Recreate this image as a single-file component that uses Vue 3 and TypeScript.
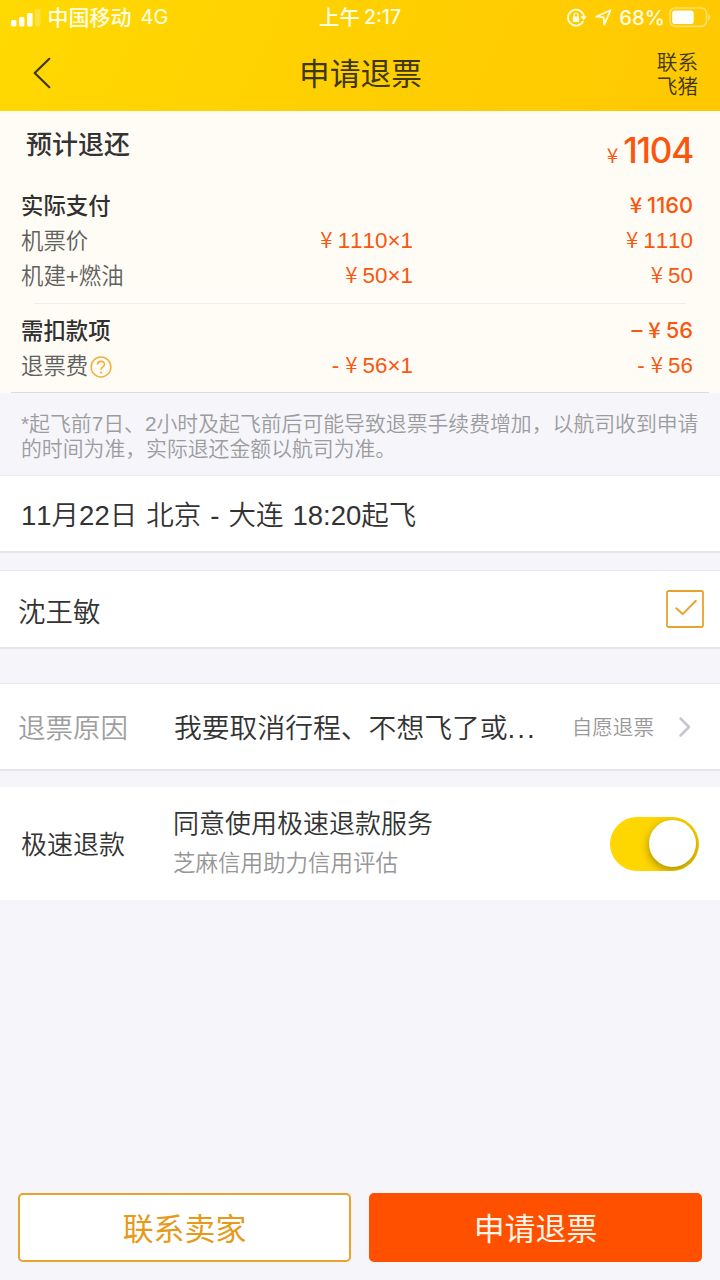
<script setup lang="ts">
interface FeeRow {
  label: string
  unit: string
  unitSign: string
  total: string
  totalSign: string
  strong?: boolean
  help?: boolean
}

const paid: FeeRow[] = [
  { label: '实际支付', unitSign: '', unit: '', totalSign: '', total: '1160', strong: true },
  { label: '机票价', unitSign: '', unit: '1110×1', totalSign: '', total: '1110' },
  { label: '机建+燃油', unitSign: '', unit: '50×1', totalSign: '', total: '50' },
]
const deducted: FeeRow[] = [
  { label: '需扣款项', unitSign: '', unit: '', totalSign: '–', total: '56', strong: true },
  { label: '退票费', unitSign: '-', unit: '56×1', totalSign: '-', total: '56', help: true },
]
const groups = [paid, deducted]
</script>

<template>
  <div class="page">
    <header class="top">
      <div class="status">
        <div class="status-left">
          <svg class="signal" width="30" height="18" viewBox="0 0 30 18">
            <rect x="0" y="11" width="5.4" height="6.6" rx="1.5" fill="#fffef2" />
            <rect x="8" y="8" width="5.4" height="9.6" rx="1.5" fill="#fffef2" />
            <rect x="16" y="4" width="5.6" height="13.6" rx="1.5" fill="#fffef2" />
            <rect x="24" y="0" width="5.4" height="17.6" rx="1.5" fill="#fff" opacity=".25" />
          </svg>
          <span class="carrier">中国移动</span>
          <span class="net">4G</span>
        </div>
        <div class="clock"><span class="ampm">上午</span><span>2:17</span></div>
        <div class="status-right">
          <svg class="lock" width="20" height="20" viewBox="0 0 20 20">
            <path d="M16.2 13.2A8 8 0 1 1 16.9 8.4" fill="none" stroke="#fffce0" stroke-width="1.9" />
            <path d="M13.4 8.2H19.8L16.6 12.2Z" fill="#fffce0" />
            <rect x="5.8" y="8.6" width="6.4" height="5.4" rx=".7" fill="#fffce0" />
            <path d="M7 9V7.3a2 2 0 0 1 4 0V9" fill="none" stroke="#fffce0" stroke-width="1.3" />
          </svg>
          <svg class="nav" width="17" height="17" viewBox="0 0 17 17">
            <path d="M1.3 7.6L15.4 1.3L9.3 15.6L8.6 8.4Z" fill="none" stroke="#fffce0" stroke-width="1.8" stroke-linejoin="round" />
          </svg>
          <span class="percent">68%</span>
          <svg class="battery" width="43" height="21" viewBox="0 0 43 21">
            <rect x="1" y="1" width="36.5" height="18.4" rx="5" fill="none" stroke="#fff" stroke-opacity=".42" stroke-width="1.7" />
            <rect x="3.2" y="3.4" width="21.5" height="13.6" rx="2.8" fill="#fffffa" />
            <path d="M39.3 7.2c2.8 1 2.8 5.2 0 6.2Z" fill="#fff" opacity=".45" />
          </svg>
        </div>
      </div>
      <nav class="bar">
        <svg class="back" width="20" height="34" viewBox="0 0 20 34">
          <path d="M17.3 2.8L2.7 17L17.3 31.2" fill="none" stroke="#3d3713" stroke-width="2.2" stroke-linecap="round" stroke-linejoin="round" />
        </svg>
        <h1>申请退票</h1>
        <div class="contact">联系<br />飞猪</div>
      </nav>
    </header>

    <section class="summary">
      <div class="estimate">
        <span class="estimate-label">预计退还</span>
        <span class="estimate-sum"><i class="yen">¥</i>1104</span>
      </div>
      <div v-for="(rows, g) in groups" :key="g" class="group">
        <div v-for="row in rows" :key="row.label" class="fee" :class="{ strong: row.strong }">
          <span class="fee-label">
            {{ row.label }}
            <svg v-if="row.help" class="help" width="22" height="22" viewBox="0 0 22 22">
              <circle cx="11" cy="11" r="9.9" fill="none" stroke="#eeb03e" stroke-width="1.5" />
              <path d="M7.5 8.7C7.5 4.2 14.5 4.3 14.5 8.5C14.5 11 11 11 11 13.8" fill="none" stroke="#eeb03e" stroke-width="1.6" />
              <circle cx="11" cy="16.5" r="1.1" fill="#eeb03e" />
            </svg>
          </span>
          <span class="fee-unit"><template v-if="row.unit"><span v-if="row.unitSign" class="sign">{{ row.unitSign }}</span><i class="yen">¥</i>{{ row.unit }}</template></span>
          <span class="fee-total"><span v-if="row.totalSign" class="sign">{{ row.totalSign }}</span><i class="yen">¥</i>{{ row.total }}</span>
        </div>
      </div>
    </section>

    <p class="note">
      <span>*起飞前7日、2小时及起飞前后可能导致退票手续费增加，以航司收到申请</span>
      <span>的时间为准，实际退还金额以航司为准。</span>
    </p>

    <section class="cell flight">11月22日 北京 - 大连 18:20起飞</section>

    <section class="cell passenger">
      <span>沈王敏</span>
      <svg width="38" height="38" viewBox="0 0 38 38">
        <rect x="1" y="1" width="36" height="36" rx="1.5" fill="none" stroke="#e8a32e" stroke-width="1.8" />
        <path d="M10.3 18.2L16.7 24.1L29.8 10.8" fill="none" stroke="#e8a32e" stroke-width="2" stroke-linecap="round" stroke-linejoin="round" />
      </svg>
    </section>

    <section class="cell reason">
      <span class="reason-label">退票原因</span>
      <span class="reason-text">我要取消行程、不想飞了或<b class="dots">...</b></span>
      <span class="reason-kind">自愿退票</span>
      <svg width="14" height="22" viewBox="0 0 14 22">
        <path d="M2.5 2.5L11 11L2.5 19.5" fill="none" stroke="#c5c7cd" stroke-width="2.5" stroke-linecap="round" stroke-linejoin="round" />
      </svg>
    </section>

    <section class="fast">
      <span class="fast-label">极速退款</span>
      <div class="fast-text">
        <span class="fast-title">同意使用极速退款服务</span>
        <span class="fast-sub">芝麻信用助力信用评估</span>
      </div>
      <div class="switch"><div class="knob"></div></div>
    </section>

    <footer class="actions">
      <button class="btn ghost">联系卖家</button>
      <button class="btn solid">申请退票</button>
    </footer>
  </div>
</template>

<style>
body {
  margin: 0;
  background: #f5f5fa;
}
</style>

<style scoped>
* {
  box-sizing: border-box;
}
.page {
  width: 720px;
  height: 1280px;
  display: flex;
  flex-direction: column;
  overflow: hidden;
  background: #f5f5fa;
  color: #333;
  font-family: "Liberation Sans", "Noto Sans CJK SC", sans-serif;
  font-weight: 350;
  font-kerning: none;
  white-space: nowrap;
}
.top {
  height: 111px;
  flex: none;
  background: linear-gradient(115deg, #ffd901 0%, #ffcf01 50%, #ffc801 100%);
}
.status {
  height: 35px;
  display: grid;
  grid-template-columns: 1fr auto 1fr;
  align-items: center;
  color: #fffde4;
  font: 500 19.5px/35px Inter, "Noto Sans CJK SC", sans-serif;
}
.status-left {
  display: flex;
  align-items: center;
  padding-left: 10.5px;
}
.signal {
  margin-right: 7px;
}
.carrier {
  font-size: 21px;
}
.net {
  margin-left: 9px;
  font-weight: 400;
  font-size: 20px;
}
.clock {
  display: flex;
  gap: 4px;
}
.ampm {
  font-size: 20.5px;
}
.status-right {
  display: flex;
  align-items: center;
  justify-content: flex-end;
  padding-right: 8px;
}
.nav {
  margin: 0 7px 0 8px;
}
.percent {
  font-size: 20.3px;
  margin-right: 4px;
}
.bar {
  height: 76px;
  display: grid;
  grid-template-columns: 1fr auto 1fr;
  align-items: center;
  color: #3d3713;
}
.back {
  margin-left: 32px;
}
h1 {
  margin: 0;
  padding: 4px 0 0 1px;
  font-size: 30.7px;
  font-weight: 400;
  line-height: 72px;
}
.contact {
  justify-self: end;
  margin-right: 22px;
  padding-top: 4px;
  font-size: 20.6px;
  line-height: 24px;
}
.summary {
  height: 282px;
  flex: none;
  background: #fffcf5;
  position: relative;
}
.summary::after {
  content: "";
  position: absolute;
  left: 11px;
  right: 11px;
  bottom: 0;
  height: 1px;
  background: #dcdcdc;
}
.yen {
  font-family: "Noto Sans CJK SC", sans-serif;
  font-style: normal;
}
.estimate {
  height: 77px;
  padding: 0 27px 0 26px;
  display: flex;
  justify-content: space-between;
}
.estimate-label {
  font-size: 26px;
  font-weight: 500;
  line-height: 68px;
}
.estimate-sum {
  font: 500 35px/78px Inter, sans-serif;
  letter-spacing: -1.2px;
  color: #f9560f;
}
.estimate-sum .yen {
  font-size: 21px;
  font-weight: 350;
  margin-right: 6px;
}
.group {
  height: 115px;
}
.group + .group {
  height: 90px;
  border-top: 1px solid transparent;
  border-image: linear-gradient(90deg, transparent 35px, #eeeeee 35px, #eeeeee 685px, transparent 685px) 1;
  padding-top: 9px;
}
.fee {
  display: grid;
  grid-template-columns: 212px 200px 1fr;
  height: 35px;
  padding: 0 27px 0 21px;
  font-size: 22.4px;
  line-height: 35px;
}
.fee-label {
  color: #606060;
  display: flex;
  align-items: center;
  line-height: 37px;
}
.help {
  margin-left: 2px;
}
.fee-unit,
.fee-total {
  color: #f9560f;
  text-align: right;
  line-height: 31px;
}
.fee-unit {
  padding-right: 20px;
}
.fee .yen {
  margin-right: 5px;
}
.sign {
  margin-right: 6px;
}
.strong .fee-label {
  color: #303030;
  font-weight: 500;
}
.strong .fee-total {
  font-family: Inter, sans-serif;
  font-weight: 500;
  font-size: 21.8px;
}
.note {
  margin: 0;
  height: 83px;
  flex: none;
  padding: 19px 0 0 21px;
  display: flex;
  flex-direction: column;
  border-bottom: 1px solid #eeeef0;
  font-size: 20.85px;
  line-height: 24.5px;
  color: #9c9c9f;
}
.cell {
  flex: none;
  display: flex;
  align-items: center;
  background: #fff;
  border-bottom: 2px solid #e5e5e8;
  font-size: 27.5px;
}
.flight {
  height: 77px;
  padding: 0 0 2px 21px;
  word-spacing: 1.4px;
}
.passenger {
  height: 79px;
  margin-top: 17px;
  padding: 0 16px 0 18px;
  justify-content: space-between;
  border-top: 1px solid #e9e9ed;
}
.passenger span {
  padding-top: 1px;
}
.reason {
  height: 88px;
  margin-top: 34px;
  padding: 0 28px 0 18px;
  border-top: 1px solid #e9e9ed;
}
.reason-label,
.reason-text {
  padding-bottom: 1px;
}
.reason-label {
  width: 156px;
  color: #9e9e9e;
}
.reason-text {
  flex: 1;
  font-size: 27.8px;
}
.dots {
  font-weight: 400;
  letter-spacing: 2px;
}
.reason-kind {
  font-size: 20.6px;
  color: #999;
  margin-right: 24px;
  padding-bottom: 1px;
}
.fast {
  flex: none;
  height: 113px;
  margin-top: 16px;
  padding: 0 21px;
  display: flex;
  align-items: center;
  background: #fff;
}
.fast-label {
  width: 152px;
  font-size: 26px;
  padding-bottom: 3px;
}
.fast-text {
  flex: 1;
  display: flex;
  flex-direction: column;
}
.fast-title {
  font-size: 26px;
  line-height: 40px;
}
.fast-sub {
  font-size: 22.5px;
  line-height: 39px;
  color: #969696;
}
.switch {
  width: 89px;
  height: 54px;
  border-radius: 27px;
  background: #ffd700;
  padding: 3.5px;
  display: flex;
  justify-content: flex-end;
  overflow: hidden;
}
.knob {
  width: 47px;
  height: 47px;
  border-radius: 50%;
  background: #fff;
  box-shadow: 0 3px 10px rgba(90, 70, 0, 0.55);
}
.actions {
  margin-top: auto;
  padding: 0 18px 18px;
  display: grid;
  grid-template-columns: 1fr 1fr;
  gap: 18px;
}
.btn {
  height: 69px;
  padding: 0 0 2px;
  border: 2px solid #e8a32e;
  border-radius: 5px;
  font-family: "Noto Sans CJK SC", sans-serif;
  font-size: 30.9px;
  line-height: 63px;
}
.ghost {
  background: #fff;
  color: #e59a1a;
}
.solid {
  background: #ff5000;
  border-color: #ff5000;
  color: #fff4e8;
}
</style>
